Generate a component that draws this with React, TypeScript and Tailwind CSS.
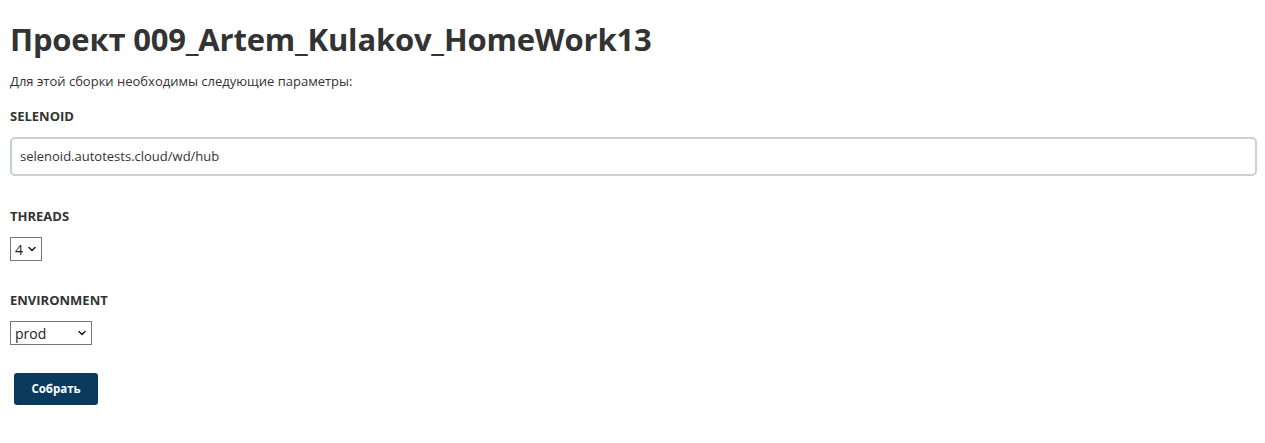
import { ChevronDown } from 'lucide-react';

const font = { fontFamily: '"Open Sans", "Noto Sans", sans-serif' };

function SelectBox({ value, width }: { value: string; width: string }) {
  return (
    <div
      className={`flex h-[24px] items-center justify-between border border-[#767676] bg-white pl-[4px] pr-[3px] text-[14px] text-[#222] ${width}`}
    >
      <span>{value}</span>
      <ChevronDown size={12} strokeWidth={3.2} className="text-[#222]" />
    </div>
  );
}

export default function App() {
  return (
    <div className="min-h-[443px] bg-white pl-[10px] pr-[8px] pt-[18px] text-[#333]" style={font}>
      <h1 className="text-[31px] font-bold leading-[42px] tracking-[-0.2px] text-[#333]">
        Проект 009_Artem_Kulakov_HomeWork13
      </h1>
      <p className="mt-[12px] text-[13px] leading-[18px]">Для этой сборки необходимы следующие параметры:</p>

      <div className="mt-[17px] text-[13px] font-bold leading-[18px]">SELENOID</div>
      <div className="mt-[12px] flex h-[39px] items-center rounded-[5px] border-2 border-[#c8d0d2] px-[8px] text-[13px] text-[#333]">
        selenoid.autotests.cloud/wd/hub
      </div>

      <div className="mt-[31px] text-[13px] font-bold leading-[18px]">THREADS</div>
      <div className="mt-[12px]">
        <SelectBox value="4" width="w-[32px]" />
      </div>

      <div className="mt-[30px] text-[13px] font-bold leading-[18px]">ENVIRONMENT</div>
      <div className="mt-[12px]">
        <SelectBox value="prod" width="w-[82px]" />
      </div>

      <button className="ml-[4px] mt-[28px] flex h-[32px] w-[84px] items-center justify-center rounded-[3px] bg-[#0a3b5c] text-[11.5px] font-bold text-white">
        Собрать
      </button>
    </div>
  );
}
